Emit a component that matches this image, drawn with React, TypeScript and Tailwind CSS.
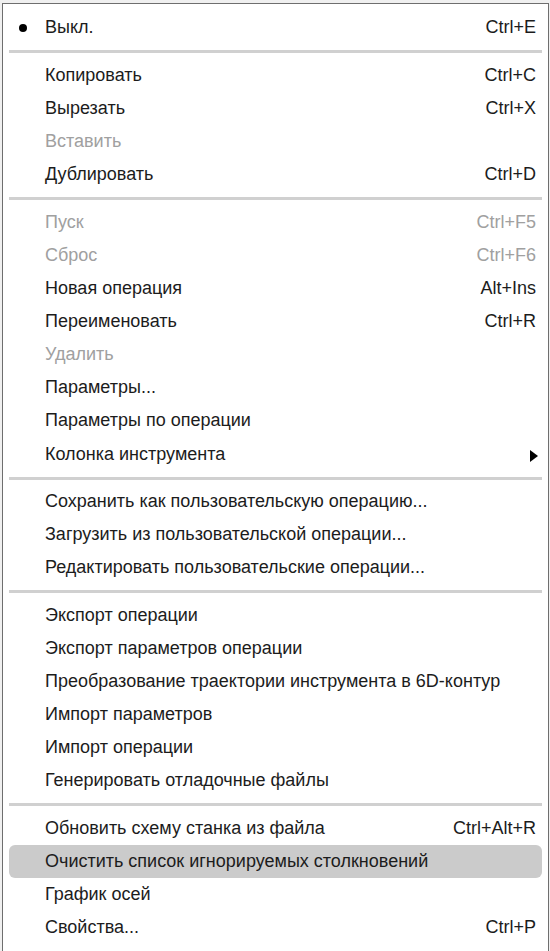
import React from "react";

type Item = {
  label: string;
  shortcut?: string;
  disabled?: boolean;
  checked?: boolean;
  submenu?: boolean;
  active?: boolean;
};

type Group = Item[];

const groups: Group[] = [
  [{ label: "Выкл.", shortcut: "Ctrl+E", checked: true }],
  [
    { label: "Копировать", shortcut: "Ctrl+C" },
    { label: "Вырезать", shortcut: "Ctrl+X" },
    { label: "Вставить", disabled: true },
    { label: "Дублировать", shortcut: "Ctrl+D" },
  ],
  [
    { label: "Пуск", shortcut: "Ctrl+F5", disabled: true },
    { label: "Сброс", shortcut: "Ctrl+F6", disabled: true },
    { label: "Новая операция", shortcut: "Alt+Ins" },
    { label: "Переименовать", shortcut: "Ctrl+R" },
    { label: "Удалить", disabled: true },
    { label: "Параметры..." },
    { label: "Параметры по операции" },
    { label: "Колонка инструмента", submenu: true },
  ],
  [
    { label: "Сохранить как пользовательскую операцию..." },
    { label: "Загрузить из пользовательской операции..." },
    { label: "Редактировать пользовательские операции..." },
  ],
  [
    { label: "Экспорт операции" },
    { label: "Экспорт параметров операции" },
    { label: "Преобразование траектории инструмента в 6D-контур" },
    { label: "Импорт параметров" },
    { label: "Импорт операции" },
    { label: "Генерировать отладочные файлы" },
  ],
  [
    { label: "Обновить схему станка из файла", shortcut: "Ctrl+Alt+R" },
    { label: "Очистить список игнорируемых столкновений", active: true },
    { label: "График осей" },
    { label: "Свойства...", shortcut: "Ctrl+P" },
  ],
];

function MenuRow({ item }: { item: Item }) {
  const color = item.disabled ? "text-[#a0a0a0]" : "text-[#1c1c1c]";
  return (
    <div
      className={`relative flex items-center mx-[6px] rounded-[6px] pl-[36px] pr-[6px] ${
        item.submenu ? "h-[35px]" : "h-[33px]"
      } ${item.active ? "bg-[#cbcbcb]" : ""} ${color}`}
    >
      {item.checked && (
        <span className="absolute left-[10px] top-1/2 -translate-y-1/2 h-[8px] w-[8px] rounded-full bg-black" />
      )}
      <span className="flex-1 whitespace-nowrap">{item.label}</span>
      {item.shortcut && <span className="whitespace-nowrap">{item.shortcut}</span>}
      {item.submenu && (
        <svg width="9" height="12" viewBox="0 0 9 12" className="mr-[-2px] mt-[2px]">
          <path d="M1 0 L9 6 L1 12 Z" fill="#000" />
        </svg>
      )}
    </div>
  );
}

export default function App() {
  return (
    <div
      className="h-[951px] w-[550px] overflow-hidden bg-[#f0f0f0] pt-[3px] pl-[2px]"
      style={{ fontFamily: '"Liberation Sans", Arial, sans-serif' }}
    >
      <div className="h-[960px] w-[547px] border border-[#6e6e6e] bg-white pt-[7px] text-[18px]">
        {groups.map((g, gi) => (
          <div key={gi}>
            {gi > 0 && (
              <div className={`flex items-center px-[6px] ${gi === 3 ? "h-[13px]" : "h-[15px]"}`}>
                <div className="h-[3px] w-full bg-[#d0d0d0]" />
              </div>
            )}
            {g.map((item, ii) => (
              <MenuRow key={ii} item={item} />
            ))}
          </div>
        ))}
      </div>
    </div>
  );
}
